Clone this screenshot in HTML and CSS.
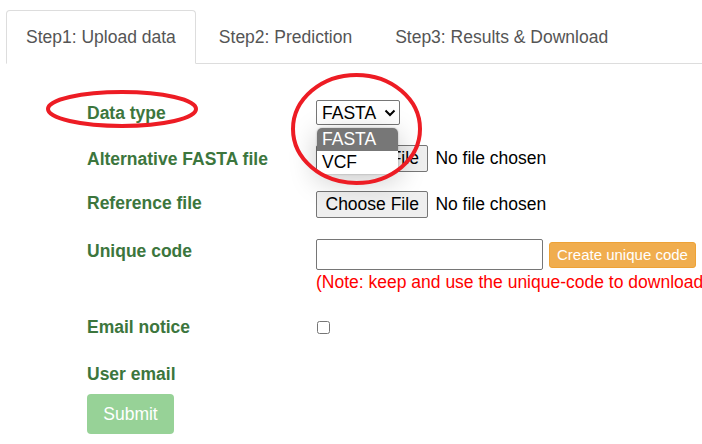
FILE: index.html
```html
<!DOCTYPE html>
<html>
<head>
<meta charset="utf-8">
<link rel="stylesheet" href="styles.css">
</head>
<body>
<ul class="tabs">
  <li class="tab active">Step1: Upload data</li>
  <li class="tab">Step2: Prediction</li>
  <li class="tab">Step3: Results &amp; Download</li>
</ul>
<form class="form">
  <div class="row r1">
    <label class="lbl">Data type</label>
    <div class="ctrl">
      <div class="select-wrap">
        <select class="sel"><option>FASTA</option><option>VCF</option></select>
        <svg class="chev" width="12" height="8" viewBox="0 0 12 8"><path d="M1.5 1.5 L6 6 L10.5 1.5" fill="none" stroke="#000" stroke-width="2"/></svg>
        <div class="popup">
          <div class="opt hl">FASTA</div>
          <div class="opt">VCF</div>
        </div>
      </div>
    </div>
  </div>
  <div class="row r2">
    <label class="lbl">Alternative FASTA file</label>
    <div class="ctrl"><input class="file" type="file"></div>
  </div>
  <div class="row r3">
    <label class="lbl">Reference file</label>
    <div class="ctrl"><input class="file" type="file"></div>
  </div>
  <div class="row r4">
    <label class="lbl top">Unique code</label>
    <div class="ctrl col">
      <div class="code-line">
        <input class="txt" type="text">
        <button type="button" class="btn-orange">Create unique code</button>
      </div>
      <div class="note">(Note: keep and use the unique-code to download</div>
    </div>
  </div>
  <div class="row r5">
    <label class="lbl">Email notice</label>
    <div class="ctrl"><input class="chk" type="checkbox"></div>
  </div>
  <div class="row r6">
    <label class="lbl">User email</label>
  </div>
  <button type="button" class="submit">Submit</button>
</form>
<svg class="annot" width="702" height="444" viewBox="0 0 702 444">
  <ellipse cx="122" cy="109" rx="74" ry="17" fill="none" stroke="#ed1c24" stroke-width="4"/>
  <ellipse cx="356.5" cy="129" rx="63.5" ry="54" fill="none" stroke="#ed1c24" stroke-width="4"/>
</svg>
</body>
</html>
```
FILE: styles.css
```css
html, body {
  margin: 0;
  padding: 0;
  background: #fff;
  overflow: hidden;
  width: 702px;
  height: 444px;
  font-family: "Liberation Sans", Arial, sans-serif;
}
.tabs {
  list-style: none;
  margin: 10px 0 0 6px;
  padding: 0;
  display: flex;
  border-bottom: 1px solid #ddd;
}
.tab {
  font-size: 17.5px;
  line-height: 24px;
  color: #555;
  padding: 14px 19px;
  margin-right: 3px;
  margin-bottom: -1px;
  border: 1px solid transparent;
  border-radius: 4px 4px 0 0;
}
.tab.active {
  border-color: #ddd #ddd transparent #ddd;
  background: #fff;
}
.form {
  padding: 36px 0 0 87px;
  display: flex;
  flex-direction: column;
  align-items: flex-start;
}
.row {
  display: flex;
  align-items: center;
}
.lbl {
  width: 229px;
  font-weight: bold;
  font-size: 17.5px;
  line-height: 24px;
  color: #3c763d;
  flex: none;
}
.lbl.top { align-self: flex-start; }
.ctrl { display: flex; align-items: center; }
.ctrl.col { flex-direction: column; align-items: flex-start; }
.r1 { height: 25px; margin-bottom: 20px; }
.r2 { height: 27px; margin-bottom: 19px; }
.r3 { height: 27px; margin-bottom: 21px; }
.r3 .lbl { margin-top: -3px; }
.r4 { height: 55px; margin-bottom: 21px; align-items: flex-start; }
.r5 { height: 24px; margin-bottom: 23px; }
.r6 { height: 24px; margin-bottom: 8px; }
.select-wrap { position: relative; }
.sel {
  appearance: none;
  -webkit-appearance: none;
  font-family: "Liberation Sans", Arial, sans-serif;
  font-size: 17.5px;
  width: 84px;
  height: 25px;
  margin: 0;
  padding: 0 0 0 5px;
  border: 1px solid #767676;
  border-radius: 2px;
  background: #fff;
  color: #000;
}
.chev {
  position: absolute;
  left: 68px;
  top: 9px;
  pointer-events: none;
}
.popup {
  position: absolute;
  top: 28px;
  left: 1px;
  width: 81px;
  background: #fff;
  border-radius: 5px;
  overflow: hidden;
  box-shadow: 0 6px 28px rgba(0,0,0,0.22), 0 0 2px rgba(0,0,0,0.3);
  z-index: 5;
}
.opt {
  font-size: 17.5px;
  line-height: 23px;
  padding-left: 5px;
  color: #000;
}
.opt.hl { background: #777; color: #fff; }
.file {
  font-family: "Liberation Sans", Arial, sans-serif;
  font-size: 17.5px;
  margin: 0;
}
.file::file-selector-button {
  font-family: "Liberation Sans", Arial, sans-serif;
  font-size: 17.5px;
  height: 27px;
  padding: 0 8.5px;
  margin-right: 7px;
  border: 1px solid #767676;
  border-radius: 2px;
  background: #efefef;
  color: #000;
}
.code-line { display: flex; align-items: center; }
.txt {
  width: 227px;
  height: 31px;
  box-sizing: border-box;
  border: 1px solid #767676;
  border-radius: 2px;
  margin: 0;
}
.btn-orange {
  margin-left: 6px;
  background: #f0ad4e;
  border: 1px solid #eea236;
  border-radius: 3px;
  color: #fff;
  font-family: "Liberation Sans", Arial, sans-serif;
  font-size: 15px;
  height: 26px;
  padding: 0 7px;
}
.note {
  color: #ff0000;
  font-size: 17.5px;
  line-height: 24px;
  white-space: nowrap;
}
.chk { margin: 0 0 0 1px; width: 13px; height: 13px; }
.submit {
  width: 87px;
  height: 40px;
  background: #97d297;
  border: none;
  border-radius: 4px;
  color: #fff;
  font-family: "Liberation Sans", Arial, sans-serif;
  font-size: 17.5px;
  padding: 0;
}
.annot {
  position: absolute;
  left: 0;
  top: 0;
  pointer-events: none;
  z-index: 10;
}
```
